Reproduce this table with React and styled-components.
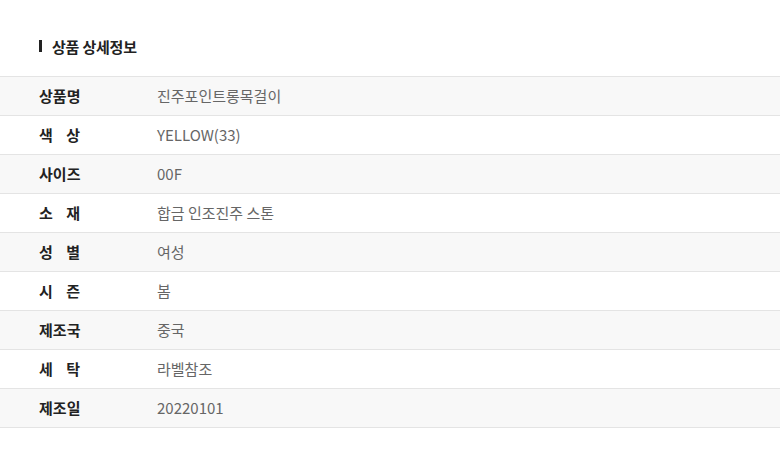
import React from "react";
import styled, { createGlobalStyle } from "styled-components";

const Global = createGlobalStyle`
  html, body { margin: 0; padding: 0; background: #fff; }
  body { font-family: "Noto Sans CJK KR", "Noto Sans", sans-serif; }
`;

const Page = styled.div`
  width: 780px;
  padding-top: 36px;
`;

const Title = styled.h2`
  display: flex;
  align-items: center;
  gap: 10px;
  margin: 0 0 20px 39px;
  height: 20px;
  font-size: 15px;
  font-weight: 700;
  color: #222;
  letter-spacing: -0.2px;
  &::before {
    content: "";
    width: 3px;
    height: 12px;
    background: #222;
  }
`;

const Table = styled.div`
  border-top: 1px solid #e4e4e4;
`;

const Row = styled.div`
  display: flex;
  align-items: center;
  height: 36px;
  padding: 0 0 2px 39px;
  border-bottom: 1px solid #e4e4e4;
  background: ${(p) => (p.$shaded ? "#f8f8f8" : "#fff")};
`;

const LabelCell = styled.div`
  width: 118px;
  flex: none;
`;

const Label = styled.span`
  display: inline-flex;
  justify-content: space-between;
  width: 41px;
  font-size: 15px;
  font-weight: 700;
  color: #222;
`;

const Value = styled.div`
  font-size: 15px;
  color: #666;
`;

const rows = [
  ["상품명", "진주포인트롱목걸이"],
  ["색상", "YELLOW(33)"],
  ["사이즈", "00F"],
  ["소재", "합금 인조진주 스톤"],
  ["성별", "여성"],
  ["시즌", "봄"],
  ["제조국", "중국"],
  ["세탁", "라벨참조"],
  ["제조일", "20220101"],
];

export default function App() {
  return (
    <Page>
      <Global />
      <Title>상품 상세정보</Title>
      <Table>
        {rows.map(([k, v], i) => (
          <Row key={k} $shaded={i % 2 === 0}>
            <LabelCell>
              <Label>
                {k.split("").map((c, j) => (
                  <span key={j}>{c}</span>
                ))}
              </Label>
            </LabelCell>
            <Value>{v}</Value>
          </Row>
        ))}
      </Table>
    </Page>
  );
}
